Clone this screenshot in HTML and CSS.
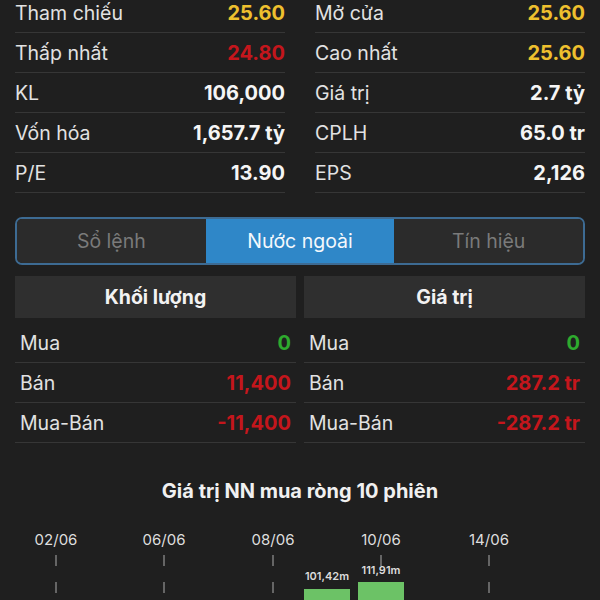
FILE: index.html
```html
<!DOCTYPE html>
<html lang="vi">
<head>
    <meta charset="UTF-8">
    <meta name="viewport" content="width=device-width, initial-scale=1.0">
    <title>Thông tin cổ phiếu</title>
    <link rel="stylesheet" href="styles.css">
</head>
<body>
    <div class="screen">
        <div class="stats">
            <div class="stat-col">
                <div class="stat-row"><span class="label">Tham chiếu</span><span class="value yellow">25.60</span></div>
                <div class="stat-row"><span class="label">Thấp nhất</span><span class="value red">24.80</span></div>
                <div class="stat-row"><span class="label">KL</span><span class="value">106,000</span></div>
                <div class="stat-row"><span class="label">Vốn hóa</span><span class="value">1,657.7 tỷ</span></div>
                <div class="stat-row"><span class="label">P/E</span><span class="value">13.90</span></div>
            </div>
            <div class="stat-col">
                <div class="stat-row"><span class="label">Mở cửa</span><span class="value yellow">25.60</span></div>
                <div class="stat-row"><span class="label">Cao nhất</span><span class="value yellow">25.60</span></div>
                <div class="stat-row"><span class="label">Giá trị</span><span class="value">2.7 tỷ</span></div>
                <div class="stat-row"><span class="label">CPLH</span><span class="value">65.0 tr</span></div>
                <div class="stat-row"><span class="label">EPS</span><span class="value">2,126</span></div>
            </div>
        </div>

        <div class="tabs">
            <div class="tab">Sổ lệnh</div>
            <div class="tab active">Nước ngoài</div>
            <div class="tab">Tín hiệu</div>
        </div>

        <div class="foreign">
            <div class="foreign-col">
                <div class="foreign-head">Khối lượng</div>
                <div class="foreign-row"><span class="label">Mua</span><span class="value green">0</span></div>
                <div class="foreign-row"><span class="label">Bán</span><span class="value red">11,400</span></div>
                <div class="foreign-row"><span class="label">Mua-Bán</span><span class="value red">-11,400</span></div>
            </div>
            <div class="foreign-col">
                <div class="foreign-head">Giá trị</div>
                <div class="foreign-row"><span class="label">Mua</span><span class="value green">0</span></div>
                <div class="foreign-row"><span class="label">Bán</span><span class="value red">287.2 tr</span></div>
                <div class="foreign-row"><span class="label">Mua-Bán</span><span class="value red">-287.2 tr</span></div>
            </div>
        </div>

        <h2 class="chart-title">Giá trị NN mua ròng 10 phiên</h2>

        <svg class="chart" width="570" height="140" viewBox="15 0 570 140">
            <g class="ticks">
                <line x1="56" y1="36" x2="56" y2="140"></line>
                <line x1="164" y1="36" x2="164" y2="140"></line>
                <line x1="273" y1="36" x2="273" y2="140"></line>
                <line x1="381" y1="36" x2="381" y2="140"></line>
                <line x1="489" y1="36" x2="489" y2="140"></line>
            </g>
            <g class="dates">
                <text x="56" y="26">02/06</text>
                <text x="164" y="26">06/06</text>
                <text x="273" y="26">08/06</text>
                <text x="381" y="26">10/06</text>
                <text x="489" y="26">14/06</text>
            </g>
            <g class="bars">
                <rect x="304" y="70" width="46" height="67"></rect>
                <rect x="358" y="63" width="46" height="74"></rect>
            </g>
            <g class="bar-labels">
                <text x="327" y="61">101,42m</text>
                <text x="381" y="55">111,91m</text>
            </g>
        </svg>
    </div>
</body>
</html>
```

FILE: styles.css
```css
body {
    margin: 0;
    background: #1f1f1f;
    font-family: Inter, "Noto Sans", sans-serif;
    color: #e4e4e4;
    overflow: hidden;
}
.screen {
    padding: 0 15px;
    margin-top: -7px;
}
.stats {
    display: grid;
    grid-template-columns: 1fr 1fr;
    gap: 30px;
}
.stat-row {
    display: flex;
    justify-content: space-between;
    align-items: center;
    height: 40px;
    box-sizing: border-box;
    border-bottom: 1px solid #363636;
    font-size: 19.5px;
}
.label {
    color: #e2e2e2;
}
.value {
    font-size: 20px;
    font-weight: 700;
    color: #f5f5f5;
}
.yellow {
    color: #eec02e;
}
.red {
    color: #c4161c;
}
.green {
    color: #2eaa2e;
}
.tabs {
    display: grid;
    grid-template-columns: 1fr 1fr 1fr;
    margin-top: 24px;
    height: 48px;
    border: 2px solid #3d6b93;
    border-radius: 7px;
    overflow: hidden;
    box-sizing: border-box;
}
.tab {
    display: flex;
    align-items: center;
    justify-content: center;
    background: #2b2b2b;
    color: #7a7a7a;
    font-size: 19.5px;
}
.tab.active {
    background: #2f87c8;
    color: #f4f8fc;
}
.foreign {
    display: grid;
    grid-template-columns: 281px 281px;
    justify-content: space-between;
    margin-top: 11px;
}
.foreign-head {
    height: 42px;
    display: flex;
    align-items: center;
    justify-content: center;
    background: #2f2f2f;
    font-size: 19.5px;
    font-weight: 700;
    color: #f2f2f2;
    margin-bottom: 5px;
}
.foreign-row {
    display: flex;
    justify-content: space-between;
    align-items: center;
    height: 40px;
    box-sizing: border-box;
    padding: 0 5px;
    border-bottom: 1px solid #363636;
    font-size: 19.5px;
}
.chart-title {
    margin: 35px 0 0;
    text-align: center;
    font-size: 20px;
    font-weight: 700;
    color: #f0f0f0;
    line-height: 26px;
}
.chart {
    display: block;
    margin-top: 15px;
}
.ticks line {
    stroke: #7d7d7d;
    stroke-width: 1.5;
    stroke-dasharray: 11 16;
}
.dates text {
    fill: #dedede;
    font-size: 15px;
    text-anchor: middle;
}
.bars rect {
    fill: #6cc266;
}
.bar-labels text {
    fill: #dcdcdc;
    font-size: 11px;
    font-weight: 600;
    text-anchor: middle;
}
```
